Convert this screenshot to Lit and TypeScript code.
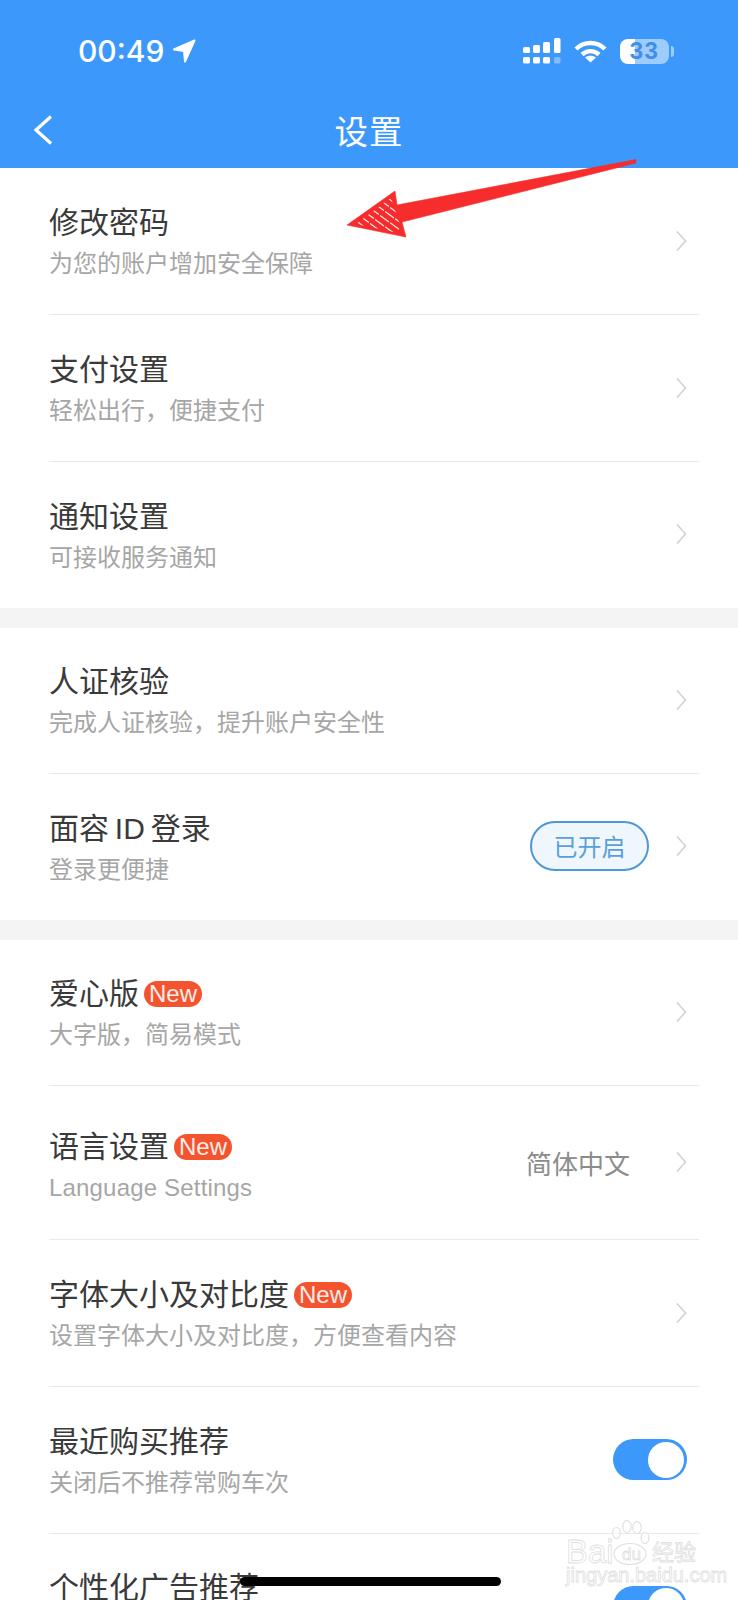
import { LitElement, html, css, nothing, svg } from "lit";
import { customElement } from "lit/decorators.js";
import { styleMap } from "lit/directives/style-map.js";

type Row = {
  title: string;
  sub?: string;
  h: number;
  top: number;
  isNew?: boolean;
  latin?: boolean;
  pill?: string;
  value?: string;
  toggle?: boolean;
};

const sections: Row[][] = [
  [
    { title: "修改密码", sub: "为您的账户增加安全保障", h: 146.5, top: 35 },
    { title: "支付设置", sub: "轻松出行，便捷支付", h: 147, top: 35 },
    { title: "通知设置", sub: "可接收服务通知", h: 146, top: 35.5 },
  ],
  [
    { title: "人证核验", sub: "完成人证核验，提升账户安全性", h: 146, top: 34 },
    { title: "面容 ID 登录", sub: "登录更便捷", h: 146, top: 35.5, pill: "已开启" },
  ],
  [
    { title: "爱心版", sub: "大字版，简易模式", h: 146.5, top: 34, isNew: true },
    { title: "语言设置", sub: "Language Settings", h: 153.5, top: 41, isNew: true, latin: true, value: "简体中文" },
    { title: "字体大小及对比度", sub: "设置字体大小及对比度，方便查看内容", h: 147, top: 35, isNew: true },
    { title: "最近购买推荐", sub: "关闭后不推荐常购车次", h: 147, top: 35, toggle: true },
    { title: "个性化广告推荐", h: 146, top: 34, toggle: true },
  ],
];

const chevron = svg`<svg class="chev" width="11" height="22" viewBox="0 0 11 22"><path d="M1 1.5 L9.5 11 L1 20.5" fill="none" stroke="#d2d2d2" stroke-width="1.6"/></svg>`;

@customElement("app-root")
export class AppRoot extends LitElement {
  static styles = css`
    :host {
      display: block;
      position: relative;
      width: 738px;
      height: 1600px;
      overflow: hidden;
      background: #f4f4f4;
      font-family: "Liberation Sans", "Noto Sans CJK SC", sans-serif;
    }
    .header { background: #3c98fb; height: 168px; color: #fff; }
    .status {
      box-sizing: border-box;
      height: 100px;
      display: flex;
      align-items: center;
      justify-content: space-between;
      padding: 2px 64px 0 78px;
    }
    .clock { display: flex; align-items: center; gap: 8px; }
    .time { font: 500 30px/1 Inter, sans-serif; letter-spacing: 0; }
    .sys { display: flex; align-items: center; gap: 13px; }
    .battery {
      width: 49px;
      height: 25px;
      border-radius: 8px;
      overflow: hidden;
      background: linear-gradient(90deg, #fff 0 15px, rgba(255, 255, 255, 0.5) 15px);
      display: flex;
      align-items: center;
      justify-content: center;
      color: #3f8fe8;
      font: 700 24px/1 "Liberation Sans", sans-serif;
      letter-spacing: 1.5px;
    }
    .batt-wrap { display: flex; align-items: center; gap: 2px; }
    .nub { width: 3px; height: 11px; border-radius: 0 3px 3px 0; background: rgba(255, 255, 255, 0.5); }
    .nav {
      box-sizing: border-box;
      height: 68px;
      padding: 0 33px 8px;
      display: grid;
      grid-template-columns: 1fr auto 1fr;
      align-items: center;
    }
    .nav h1 {
      margin: 0;
      font: 400 33.5px/1.2 "Noto Sans CJK SC", sans-serif;
      letter-spacing: 1px;
    }
    .list { display: flex; flex-direction: column; gap: 20px; }
    .section { background: #fff; padding-left: 49px; padding-right: 39px; }
    .row {
      box-sizing: border-box;
      display: flex;
      align-items: center;
      padding-right: 12px;
      border-bottom: 1px solid #e9e9e9;
    }
    .row:last-child { border-bottom-color: transparent; }
    .text { flex: 1; min-width: 0; align-self: flex-start; }
    .title {
      display: flex;
      align-items: center;
      gap: 5px;
      font-size: 30px;
      line-height: 40px;
      color: #3a3a3a;
      white-space: nowrap;
      word-spacing: -2.5px;
    }
    .sub {
      margin-top: 4px;
      font-size: 24px;
      line-height: 34px;
      color: #a6a6a6;
      white-space: nowrap;
    }
    .sub.latin { letter-spacing: 0.18px; }
    .new {
      background: #f4532f;
      color: #fdece8;
      border-radius: 13px;
      height: 26px;
      width: 58px;
      font-size: 24px;
      line-height: 26px;
      text-align: center;
      word-spacing: 0;
    }
    .pill {
      box-sizing: border-box;
      width: 119px;
      height: 50px;
      border: 2px solid #4f98d8;
      border-radius: 25px;
      background: #eff7fd;
      color: #5a9fdc;
      font-size: 24px;
      line-height: 49px;
      text-align: center;
      margin-right: 27px;
    }
    .value { font-size: 26px; color: #8c8c8c; margin-right: 46px; }
    .chev { display: block; }
    .toggle {
      box-sizing: border-box;
      width: 74px;
      height: 41px;
      border-radius: 21px;
      background: #3c98fb;
      padding: 2.5px 3px;
      display: flex;
      justify-content: flex-end;
    }
    .knob { width: 36px; height: 36px; border-radius: 50%; background: #fff; }
    .arrow { position: absolute; left: 340px; top: 150px; }
    .home {
      position: absolute;
      left: 240px;
      top: 1577px;
      width: 261px;
      height: 9px;
      border-radius: 5px;
      background: #000;
    }
    .mark { position: absolute; left: 566px; top: 1516px; width: 136px; height: 70px; }
    .mark span {
      position: absolute;
      color: rgba(255, 255, 255, 0.55);
      -webkit-text-stroke: 0.8px #e0e0e0;
      white-space: nowrap;
    }
    .m-bai { left: 0; top: 23px; font-size: 33px; line-height: 26px; }
    .m-du { left: 56px; top: 30px; font-size: 17px; line-height: 18px; }
    .m-cn { left: 86px; top: 25px; font-size: 22px; line-height: 24px; }
    .mark .m-url { left: 0; top: 50px; font-size: 20px; line-height: 18px; color: #fff; }
    .paw { position: absolute; left: 44px; top: 0; }
  `;

  private renderRow(r: Row) {
    return html`<div class="row" style=${styleMap({ height: `${r.h}px` })}>
      <div class="text" style=${styleMap({ marginTop: `${r.top}px` })}>
        <div class="title">${r.title}${r.isNew ? html`<span class="new">New</span>` : nothing}</div>
        ${r.sub ? html`<div class="sub ${r.latin ? "latin" : ""}">${r.sub}</div>` : nothing}
      </div>
      ${r.pill ? html`<div class="pill">${r.pill}</div>` : nothing}
      ${r.value ? html`<div class="value">${r.value}</div>` : nothing}
      ${r.toggle ? html`<div class="toggle"><div class="knob"></div></div>` : chevron}
    </div>`;
  }

  render() {
    return html`
      <div class="header">
        <div class="status">
          <div class="clock">
            <span class="time">00:49</span>
            <svg width="24" height="24" viewBox="0 0 24 24">
              <path d="M22.5 1.5 L2 10.5 L12 12 L13 22.5 Z" fill="#fff" stroke="#fff" stroke-width="2" stroke-linejoin="round"/>
            </svg>
          </div>
          <div class="sys">
            <svg width="38" height="26" viewBox="0 0 38 26" fill="#fff">
              <rect x="0" y="9" width="7" height="6" rx="1.5"/>
              <rect x="10" y="7" width="7" height="8" rx="1.5"/>
              <rect x="20" y="4" width="7" height="11" rx="1.5"/>
              <rect x="31" y="0" width="6.5" height="15" rx="1.5"/>
              <rect x="0" y="19" width="7" height="6.5" rx="1.5"/>
              <rect x="10" y="19" width="7" height="6.5" rx="1.5"/>
              <rect x="20" y="19" width="7" height="6.5" rx="1.5"/>
              <rect x="31" y="19" width="6.5" height="6.5" rx="1.5" opacity="0.35"/>
            </svg>
            <svg width="33" height="23" viewBox="0 0 33 23" fill="none" stroke="#fff" stroke-width="4.4">
              <path d="M2 9 C10 1 23 1 31 9"/>
              <path d="M8 14.5 C13 10 20 10 25 14.5"/>
              <path d="M16.5 22.5 L11 17.5 C14 15 19 15 22 17.5 Z" fill="#fff" stroke="none"/>
            </svg>
            <div class="batt-wrap">
              <div class="battery">33</div>
              <div class="nub"></div>
            </div>
          </div>
        </div>
        <div class="nav">
          <svg width="20" height="30" viewBox="0 0 20 30">
            <path d="M18 1.5 L3 15 L18 28.5" fill="none" stroke="#fff" stroke-width="3.2"/>
          </svg>
          <h1>设置</h1>
          <span></span>
        </div>
      </div>
      <div class="list">
        ${sections.map((s) => html`<div class="section">${s.map((r) => this.renderRow(r))}</div>`)}
      </div>

      <div class="mark">
        <svg class="paw" width="50" height="58" viewBox="0 0 50 58" fill="rgba(255,255,255,0.6)" stroke="#e0e0e0" stroke-width="1.2">
          <ellipse cx="6.5" cy="17" rx="3.8" ry="5.5"/>
          <ellipse cx="17" cy="10.5" rx="4.2" ry="6"/>
          <ellipse cx="27" cy="11.5" rx="4.2" ry="6"/>
          <ellipse cx="35" cy="22" rx="3.8" ry="5.5"/>
          <ellipse cx="20" cy="38" rx="16" ry="10.5"/>
        </svg>
        <span class="m-bai">Bai</span>
        <span class="m-du">du</span>
        <span class="m-cn">经验</span>
        <span class="m-url">jingyan.baidu.com</span>
      </div>

      <svg class="arrow" width="300" height="100" viewBox="340 150 300 100">
        <defs>
          <clipPath id="head"><polygon points="356,224 391,198 399,222 403,234"/></clipPath>
        </defs>
        <polygon points="636,159.5 397,205 395,191 347,225 406,237 402,222 636,163" fill="#f72c2c" stroke="#f72c2c" stroke-width="0.6" stroke-linejoin="round"/>
        <g clip-path="url(#head)" stroke="#fff" stroke-width="1.2" opacity="0.9" stroke-dasharray="11 1.5">
          <path d="M355 220 l30 22 M360 216 l30 22 M365 212 l30 22 M370 208 l30 22 M375 204 l30 22 M380 200 l30 22 M385 196 l30 22"/>
        </g>
      </svg>

      <div class="home"></div>
    `;
  }
}
